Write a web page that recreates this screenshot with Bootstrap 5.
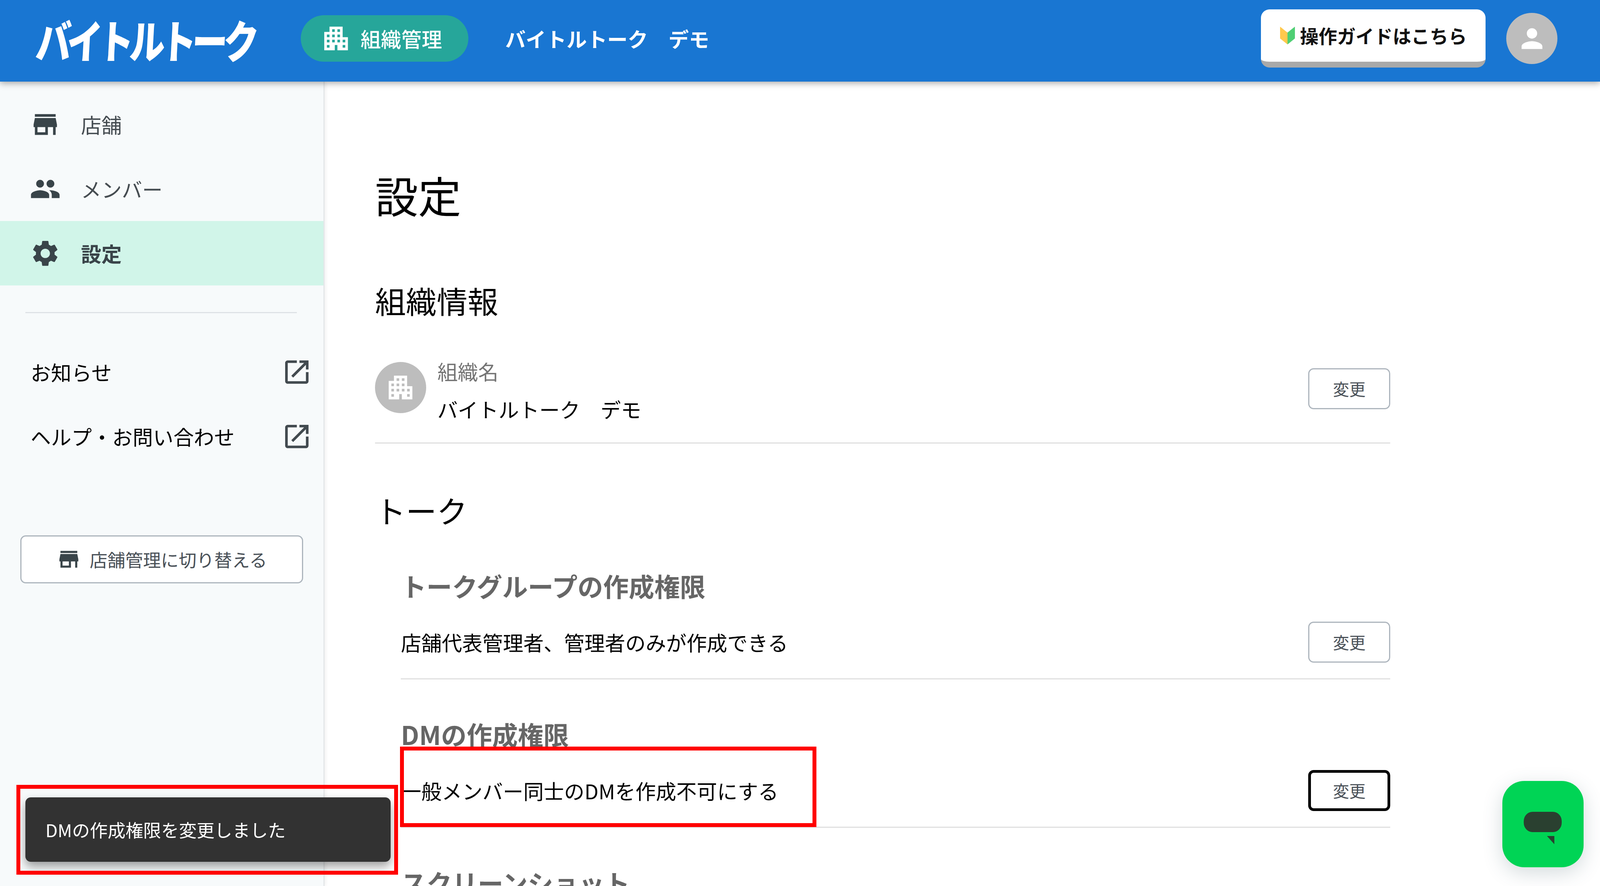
<!DOCTYPE html>
<html lang="ja">
<head>
<meta charset="utf-8">
<title>設定</title>
<link rel="stylesheet" href="https://cdn.jsdelivr.net/npm/bootstrap@5.3.0/dist/css/bootstrap.min.css">
<style>
:root{--u:calc(100vw / 4338);--f:calc(100vw / 4338 * .9 + .1px)}
html,body{height:100%;margin:0}
body{font-family:"Noto Sans CJK JP","Noto Sans",sans-serif;font-size:calc(var(--f) * 55);line-height:1.5;color:#000;overflow:hidden;background:#fff}
.app-shell{height:100vh}
.top-bar{height:209px;flex:none;background:#1976d2;padding:0 calc(var(--u) * 115) 12px calc(var(--u) * 97);box-shadow:0 4px 16px rgba(0,0,0,.35);z-index:5;position:relative;color:#fff;justify-content:flex-start}
.brand-wrap{width:calc(var(--u) * 605);height:120px;flex:none;margin-right:calc(var(--u) * 114);overflow:visible}
.brand-mark{display:block;font-size:116px;font-weight:900;line-height:120px;color:#fff;white-space:nowrap;letter-spacing:-14px;transform-origin:left center;transform:scaleX(.785) skewX(-4deg);padding:0;text-decoration:none}
.org-pill{height:119px;width:calc(var(--u) * 454);flex:none;background:#26a69a;border-radius:60px;color:#fff;font-size:calc(var(--f) * 55);font-weight:500;gap:calc(var(--u) * 24);padding-left:calc(var(--u) * 52)}
.org-pill svg{width:calc(var(--f) * 85);height:85px;fill:#fff}
.org-title{font-size:calc(var(--f) * 55);font-weight:700;margin-left:calc(var(--u) * 100);white-space:pre}
.guide-btn{width:calc(var(--u) * 609);height:149px;background:#fff;border:0;border-bottom:15px solid #a9a9a9;border-radius:22px;color:#111;font-size:calc(var(--f) * 50);font-weight:700;gap:calc(var(--u) * 14);padding:0;margin-right:calc(var(--u) * 56);flex:none}
.guide-btn:hover{background:#fff;color:#111}
.guide-btn svg{width:calc(var(--f) * 40);height:48px}
.user-circle{width:calc(var(--f) * 138);height:calc(var(--f) * 138);background:#bdbdbd;border-radius:50%;flex:none}
.user-circle svg{width:calc(var(--f) * 84);height:calc(var(--f) * 84);fill:#fff}
.side-panel{width:calc(var(--u) * 880);flex:none;background:#f7fafb;border-right:3px solid #e4e7e9;box-shadow:3px 0 8px rgba(0,0,0,.06);padding-top:27px;color:#424a4f}
.side-link{height:165px;padding:0 0 0 calc(var(--u) * 81);color:#454c51;font-size:calc(var(--f) * 55);gap:calc(var(--u) * 54)}
.side-link svg{width:calc(var(--f) * 84);height:calc(var(--f) * 84);fill:#394449;flex:none}
.side-link.is-current{background:#d1f5e9;font-weight:700;color:#394449}
.side-rule{height:3px;background:#dee2e6;margin:68px calc(var(--u) * 72) 68px calc(var(--u) * 69);opacity:1;border:0}
.ext-link{height:165px;padding:0 calc(var(--u) * 30) 0 calc(var(--u) * 83);color:#000;font-size:calc(var(--f) * 55)}
.ext-link svg{width:calc(var(--f) * 84);height:calc(var(--f) * 84);fill:#424a4f;flex:none}
.switch-btn{width:calc(var(--u) * 767);height:123px;margin:171px 0 0 calc(var(--u) * 55);background:#fff;border:3px solid #adb5bd;border-radius:14px;color:#495057;font-size:calc(var(--f) * 48);gap:calc(var(--u) * 22);padding:0}
.switch-btn:hover{background:#fff;color:#495057}
.switch-btn svg{width:calc(var(--f) * 68);height:calc(var(--f) * 68);fill:#394449}
.main-area{padding:209px 0 0 calc(var(--u) * 137);width:calc(var(--u) * 2889);flex:none}
.page-title{font-size:calc(var(--f) * 116);font-weight:400;line-height:160px;margin:0}
.block-title{font-size:calc(var(--f) * 83);font-weight:400;line-height:120px;margin:0}
.title-org{margin-top:131px}
.title-talk{margin-top:110px}
.org-row{padding:73px 0 37px;border-bottom:3px solid #e0e0e0}
.org-avatar{width:calc(var(--f) * 138);height:calc(var(--f) * 138);border-radius:50%;background:#bdbdbd;flex:none;margin-top:25px;margin-right:calc(var(--u) * 30)}
.org-avatar svg{width:calc(var(--f) * 85);height:calc(var(--f) * 85);fill:#fff}
.org-label{color:#757575;line-height:97px}
.org-value{line-height:97px;white-space:pre}
.chg-btn{width:calc(var(--u) * 222);height:105px;background:#fff;border:3px solid #adb5bd;border-radius:14px;color:#495057;font-size:calc(var(--f) * 44);padding:0;flex:none}
.chg-btn:hover{background:#fff;color:#495057}
.chg-btn.is-focused{border:7px solid #000}
.org-row .chg-btn{margin-top:41px}
.sub-block{margin-left:calc(var(--u) * 70)}
.sub-title{font-size:calc(var(--f) * 69);font-weight:700;color:#666;line-height:100px;margin:0}
.sub-row{border-bottom:3px solid #e0e0e0;padding:42px 0 40px;line-height:1.5}
.gap-a{margin-top:84px}
.gap-b{margin-top:90px}
.callout{position:fixed;border:10px solid #f00;z-index:20}
.callout-main{left:calc(var(--u) * 1084);top:1912px;width:calc(var(--u) * 1129);height:206px}
.callout-toast{left:calc(var(--u) * 45);top:2010px;width:calc(var(--u) * 1034);height:230px}
.toast-msg{position:fixed;left:calc(var(--u) * 69);top:2042px;width:calc(var(--u) * 990);height:165px;background:#323232;border-radius:14px;box-shadow:0 12px 24px rgba(0,0,0,.38);color:#fff;font-size:calc(var(--f) * 48);padding-left:calc(var(--u) * 54);z-index:15}
.chat-fab{position:fixed;left:calc(var(--u) * 4073);top:2000px;width:calc(var(--u) * 220);height:221px;background:#00d455;border:0;border-radius:56px;box-shadow:0 14px 50px rgba(60,90,100,.22);padding:0;z-index:15}
.chat-fab svg{width:100%;height:100%;display:block}
</style>
</head>
<body>
<div class="app-shell d-flex flex-column">
  <nav class="top-bar navbar navbar-expand d-flex align-items-center flex-nowrap">
    <div class="brand-wrap"><a class="brand-mark" href="#">バイトルトーク</a></div>
    <div class="org-pill d-flex align-items-center">
      <svg viewBox="0 0 24 24"><path d="M17 11V3H7v4H3v14h8v-4h2v4h8V11h-4zM7 19H5v-2h2v2zm0-4H5v-2h2v2zm0-4H5V9h2v2zm4 4H9v-2h2v2zm0-4H9V9h2v2zm0-4H9V5h2v2zm4 8h-2v-2h2v2zm0-4h-2V9h2v2zm0-4h-2V5h2v2zm4 12h-2v-2h2v2zm0-4h-2v-2h2v2z"/></svg>
      <span>組織管理</span>
    </div>
    <span class="org-title">バイトルトーク　デモ</span>
    <button class="btn guide-btn ms-auto d-flex align-items-center justify-content-center" type="button">
      <svg viewBox="0 0 40 48"><path d="M0 0l20 16v32L0 32z" fill="#ffc94d"/><path d="M40 0L20 16v32l20-16z" fill="#4fcf74"/></svg>
      <span>操作ガイドはこちら</span>
    </button>
    <div class="user-circle d-flex align-items-center justify-content-center">
      <svg viewBox="0 0 24 24"><path d="M12 12c2.21 0 4-1.79 4-4s-1.79-4-4-4-4 1.79-4 4 1.79 4 4 4zm0 2c-2.67 0-8 1.34-8 4v2h16v-2c0-2.66-5.33-4-8-4z"/></svg>
    </div>
  </nav>
  <div class="d-flex flex-grow-1 overflow-hidden">
    <aside class="side-panel">
      <a class="side-link d-flex align-items-center text-decoration-none" href="#">
        <svg viewBox="0 0 24 24"><path d="M20 4H4v2h16V4zm1 10v-2l-1-5H4l-1 5v2h1v6h10v-6h4v6h2v-6h1zm-9 4H6v-4h6v4z"/></svg><span>店舗</span>
      </a>
      <a class="side-link d-flex align-items-center text-decoration-none" href="#">
        <svg viewBox="0 0 24 24"><path d="M16 11c1.66 0 2.99-1.34 2.99-3S17.66 5 16 5c-1.66 0-3 1.34-3 3s1.34 3 3 3zm-8 0c1.66 0 2.99-1.34 2.99-3S9.66 5 8 5C6.34 5 5 6.34 5 8s1.34 3 3 3zm0 2c-2.33 0-7 1.17-7 3.5V19h14v-2.5c0-2.33-4.67-3.5-7-3.5zm8 0c-.29 0-.62.02-.97.05 1.16.84 1.97 1.97 1.97 3.45V19h6v-2.5c0-2.33-4.67-3.5-7-3.5z"/></svg><span>メンバー</span>
      </a>
      <a class="side-link is-current d-flex align-items-center text-decoration-none" href="#">
        <svg viewBox="0 0 24 24"><path d="M19.14,12.94c0.04-0.3,0.06-0.61,0.06-0.94c0-0.32-0.02-0.64-0.07-0.94l2.03-1.58c0.18-0.14,0.23-0.41,0.12-0.61 l-1.92-3.32c-0.12-0.22-0.37-0.29-0.59-0.22l-2.39,0.96c-0.5-0.38-1.03-0.7-1.62-0.94L14.4,2.81c-0.04-0.24-0.24-0.41-0.48-0.41 h-3.84c-0.24,0-0.43,0.17-0.47,0.41L9.25,5.35C8.66,5.59,8.12,5.92,7.63,6.29L5.24,5.33c-0.22-0.08-0.47,0-0.59,0.22L2.74,8.87 C2.62,9.08,2.66,9.34,2.86,9.48l2.03,1.58C4.84,11.36,4.8,11.69,4.8,12s0.02,0.64,0.07,0.94l-2.03,1.58 c-0.18,0.14-0.23,0.41-0.12,0.61l1.92,3.32c0.12,0.22,0.37,0.29,0.59,0.22l2.39-0.96c0.5,0.38,1.03,0.7,1.62,0.94l0.36,2.54 c0.05,0.24,0.24,0.41,0.48,0.41h3.84c0.24,0,0.44-0.17,0.47-0.41l0.36-2.54c0.59-0.24,1.13-0.56,1.62-0.94l2.39,0.96 c0.22,0.08,0.47,0,0.59-0.22l1.92-3.32c0.12-0.22,0.07-0.47-0.12-0.61L19.14,12.94z M12,15.6c-1.98,0-3.6-1.62-3.6-3.6 s1.62-3.6,3.6-3.6s3.6,1.62,3.6,3.6S13.98,15.6,12,15.6z"/></svg><span>設定</span>
      </a>
      <hr class="side-rule">
      <a class="ext-link d-flex align-items-center justify-content-between text-decoration-none" href="#">
        <span>お知らせ</span>
        <svg viewBox="0 0 24 24"><path d="M19 19H5V5h7V3H5c-1.11 0-2 .9-2 2v14c0 1.1.89 2 2 2h14c1.1 0 2-.9 2-2v-7h-2v7zM14 3v2h3.59l-9.83 9.83 1.41 1.41L19 6.41V10h2V3h-7z"/></svg>
      </a>
      <a class="ext-link d-flex align-items-center justify-content-between text-decoration-none" href="#">
        <span>ヘルプ・お問い合わせ</span>
        <svg viewBox="0 0 24 24"><path d="M19 19H5V5h7V3H5c-1.11 0-2 .9-2 2v14c0 1.1.89 2 2 2h14c1.1 0 2-.9 2-2v-7h-2v7zM14 3v2h3.59l-9.83 9.83 1.41 1.41L19 6.41V10h2V3h-7z"/></svg>
      </a>
      <button class="btn switch-btn d-flex align-items-center justify-content-center" type="button">
        <svg viewBox="0 0 24 24"><path d="M20 4H4v2h16V4zm1 10v-2l-1-5H4l-1 5v2h1v6h10v-6h4v6h2v-6h1zm-9 4H6v-4h6v4z"/></svg>
        <span>店舗管理に切り替える</span>
      </button>
    </aside>
    <main class="main-area">
      <h1 class="page-title">設定</h1>
      <h2 class="block-title title-org">組織情報</h2>
      <div class="org-row d-flex align-items-start">
        <div class="org-avatar d-flex align-items-center justify-content-center">
          <svg viewBox="0 0 24 24"><path d="M17 11V3H7v4H3v14h8v-4h2v4h8V11h-4zM7 19H5v-2h2v2zm0-4H5v-2h2v2zm0-4H5V9h2v2zm4 4H9v-2h2v2zm0-4H9V9h2v2zm0-4H9V5h2v2zm4 8h-2v-2h2v2zm0-4h-2V9h2v2zm0-4h-2V5h2v2zm4 12h-2v-2h2v2zm0-4h-2v-2h2v2z"/></svg>
        </div>
        <div class="flex-grow-1">
          <div class="org-label">組織名</div>
          <div class="org-value">バイトルトーク　デモ</div>
        </div>
        <button class="btn chg-btn" type="button">変更</button>
      </div>
      <h2 class="block-title title-talk">トーク</h2>
      <section class="sub-block gap-a">
        <h3 class="sub-title">トークグループの作成権限</h3>
        <div class="sub-row d-flex align-items-center justify-content-between">
          <span>店舗代表管理者、管理者のみが作成できる</span>
          <button class="btn chg-btn" type="button">変更</button>
        </div>
      </section>
      <section class="sub-block gap-b">
        <h3 class="sub-title">DMの作成権限</h3>
        <div class="sub-row d-flex align-items-center justify-content-between">
          <span>一般メンバー同士のDMを作成不可にする</span>
          <button class="btn chg-btn is-focused" type="button">変更</button>
        </div>
      </section>
      <section class="sub-block gap-b">
        <h3 class="sub-title">スクリーンショット</h3>
      </section>
    </main>
  </div>
</div>
<div class="toast-msg d-flex align-items-center">DMの作成権限を変更しました</div>
<div class="callout callout-main"></div>
<div class="callout callout-toast"></div>
<button class="chat-fab" type="button" aria-label="チャット">
  <svg viewBox="0 0 220 221" preserveAspectRatio="none"><rect x="58" y="79" width="103" height="52" rx="24" fill="#2a4030"/><path d="M121 141h20v21z" fill="#2a4030"/></svg>
</button>
<script src="https://cdn.jsdelivr.net/npm/bootstrap@5.3.0/dist/js/bootstrap.bundle.min.js"></script>
</body>
</html>
